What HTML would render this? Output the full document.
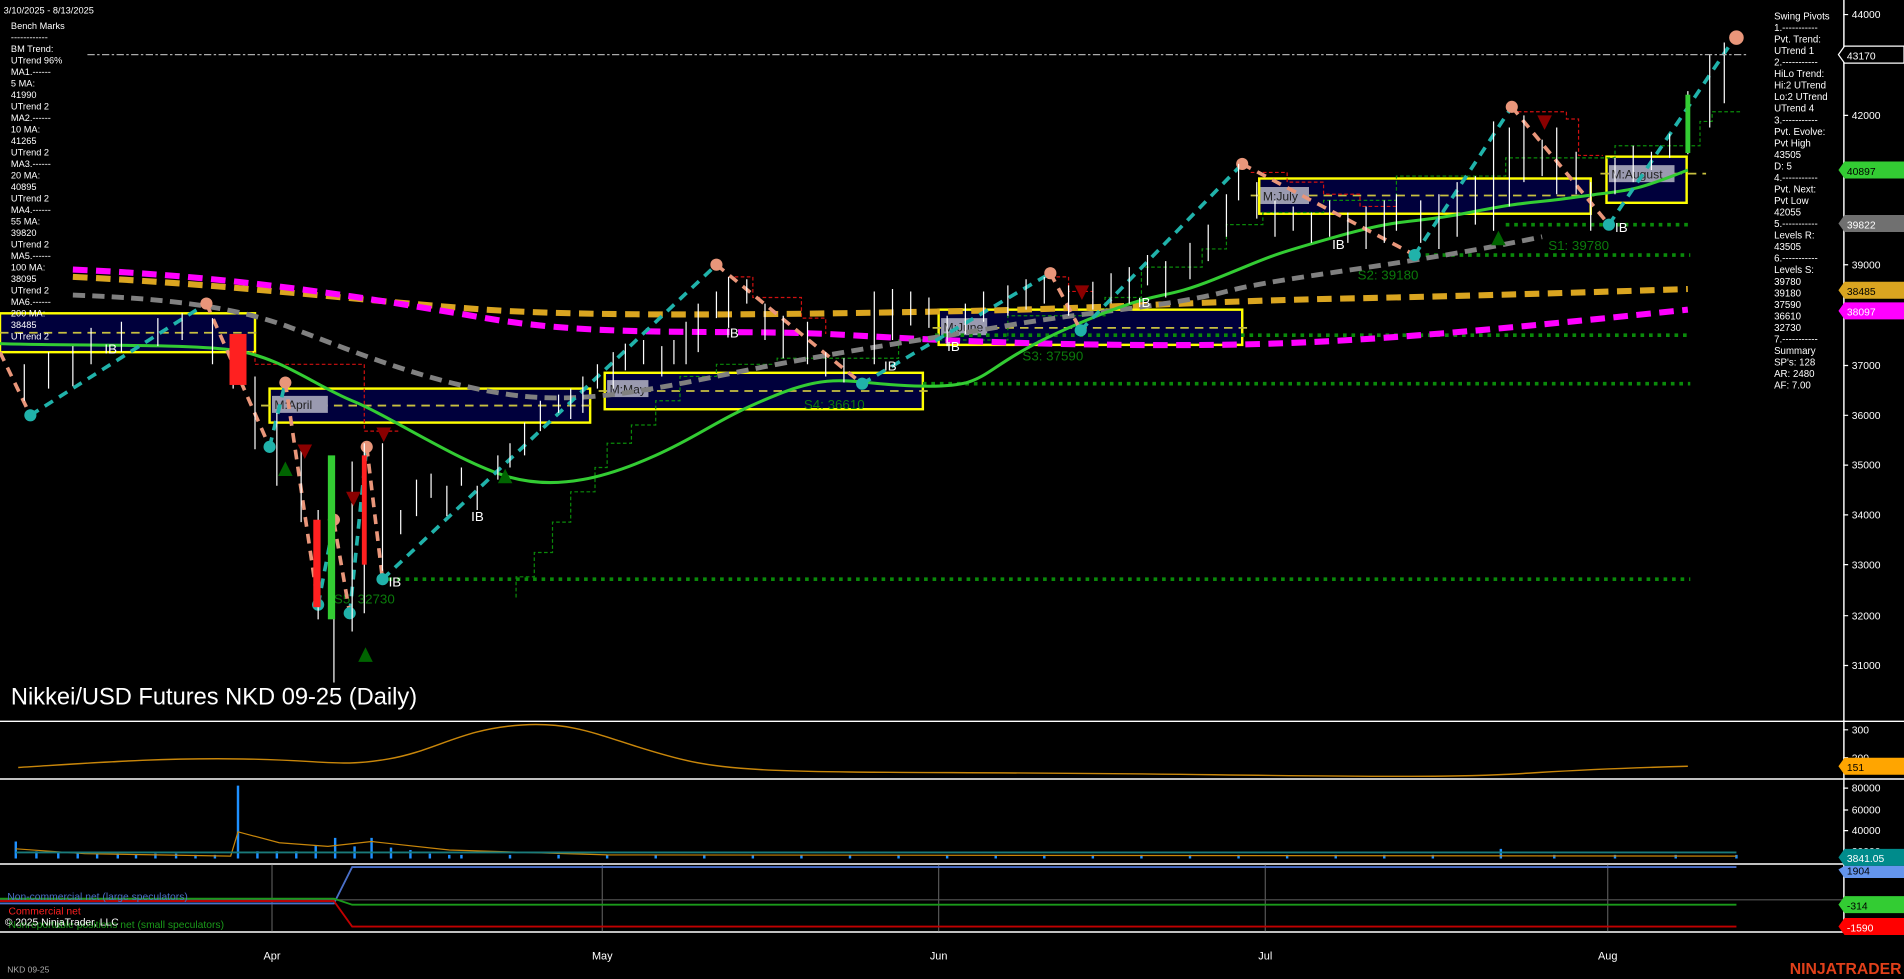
<!DOCTYPE html>
<html><head><meta charset="utf-8"><style>
html,body{margin:0;padding:0;background:#000;width:1904px;height:979px;overflow:hidden}
svg{display:block}
text{font-family:"Liberation Sans",sans-serif}
</style></head><body>
<svg width="1904" height="979" viewBox="0 0 1568 806.2" preserveAspectRatio="none" xmlns="http://www.w3.org/2000/svg">
<rect width="1568" height="806.2" fill="#000"/>
<!-- boxes -->
<g stroke="#ffff00" stroke-width="2" fill="#00003c">
<rect x="0" y="258" width="210" height="32"/>
<rect x="222" y="320" width="264" height="28"/>
<rect x="498" y="307" width="262" height="30"/>
<rect x="773" y="255" width="250" height="29"/>
<rect x="1037" y="147" width="273" height="29"/>
<rect x="1323" y="129" width="66" height="38"/>
</g>
<g stroke="#c8c040" stroke-width="1.5" stroke-dasharray="7,5" fill="none">
<line x1="0" y1="274" x2="215" y2="274"/><line x1="215" y1="334" x2="490" y2="334"/>
<line x1="493" y1="322" x2="765" y2="322"/><line x1="768" y1="270" x2="1028" y2="270"/>
<line x1="1030" y1="161" x2="1315" y2="161"/><line x1="1318" y1="143" x2="1405" y2="143"/>
</g>
<g font-family="Liberation Mono,monospace" font-size="10" fill="#222">
<rect x="224" y="326" width="46" height="14" fill="#9a9ab0"/><text x="226" y="337">M:April</text>
<rect x="500" y="313" width="34" height="14" fill="#9a9ab0"/><text x="502" y="324">M:May</text>
<rect x="775" y="262" width="38" height="14" fill="#9a9ab0"/><text x="777" y="273">M:June</text>
<rect x="1038" y="154" width="40" height="14" fill="#9a9ab0"/><text x="1040" y="165">M:July</text>
<rect x="1325" y="136" width="54" height="14" fill="#9a9ab0"/><text x="1327" y="147">M:August</text>
</g>
<!-- dotted levels -->
<g stroke="#0a8a0a" stroke-width="3" stroke-dasharray="3,4" fill="none">
<line x1="1240" y1="185" x2="1392" y2="185"/><line x1="1160" y1="210" x2="1392" y2="210"/>
<line x1="770" y1="276" x2="1392" y2="276"/><line x1="760" y1="316" x2="1392" y2="316"/>
<line x1="320" y1="477" x2="1392" y2="477"/>
</g>
<g font-size="11" fill="#0b7a0b">
<text x="1275" y="206">S1: 39780</text><text x="1118" y="230">S2: 39180</text>
<text x="842" y="297">S3: 37590</text><text x="662" y="337">S4: 36610</text><text x="275" y="497">S5: 32730</text>
</g>
<!-- stepped green -->
<path d="M425,492 V475 H440 V455 H455 V430 H470 V405 H490 V385 H500 V365 H520 V350 H540 V330 H560 V310 H590 V300 H640 V295 H740 V280 H830 V260 H910 V245 H940 V220 H990 V205 H1010 V185 H1040 V175 H1090 V165 H1150 V145 H1240 V130 H1330 V120 H1400 V100 H1410 V92 H1435" stroke="#0a8a0a" stroke-width="1" stroke-dasharray="3,2" fill="none"/>
<g stroke="#d01010" stroke-width="1" stroke-dasharray="3,2" fill="none">
<path d="M190,275 V290 H210 V300 H250 V300 H300 V355 H330"/>
<path d="M600,228 H620 V245 H660 V262 H680 V275"/>
<path d="M860,228 H880 V240 H900 V255"/>
<path d="M1030,142 H1060 V150 H1090 V160 H1120 V170 H1150 V178"/>
<path d="M1250,92 H1290 V98 H1300 V128 H1320"/>
</g>
<!-- MAs -->
<path d="M60,228 C200,235 300,248 400,255 S700,258 800,256 1000,248 1100,246 1300,241 1390,238" stroke="#daa520" stroke-width="5" stroke-dasharray="12,7" fill="none"/>
<path d="M60,222 C200,228 300,245 400,262 S600,270 700,276 900,285 1000,284 1200,275 1390,255" stroke="#ff00ff" stroke-width="5" stroke-dasharray="12,7" fill="none"/>
<path d="M60,243 C150,246 200,255 240,270 S350,315 420,325 560,315 640,300 760,280 830,268 960,253 1010,240 1150,220 1270,195 1390,170" stroke="#808080" stroke-width="4" stroke-dasharray="10,6" fill="none"/>
<path d="M0,283 C60,285 150,283 190,288 S260,318 290,330 380,382 420,393 500,393 540,375 590,345 640,325 700,317 760,318 800,305 880,270 950,250 1000,230 1040,212 1100,195 1160,185 1210,175 1260,168 1300,162 1340,160 1390,140" stroke="#33cc33" stroke-width="2.5" fill="none"/>
<!-- swing lines -->
<g stroke="#20b2aa" stroke-width="3" stroke-dasharray="8,6" fill="none">
<path d="M25,342 L170,250"/><path d="M222,368 L235,315"/><path d="M262,498 L275,430"/><path d="M288,505 L302,368"/>
<path d="M315,477 L590,218"/><path d="M710,316 L865,225"/><path d="M890,272 L1023,135"/>
<path d="M1165,210 L1245,88"/><path d="M1325,185 L1428,32"/>
</g>
<g stroke="#e9967a" stroke-width="3" stroke-dasharray="8,6" fill="none">
<path d="M0,290 L25,342"/><path d="M170,250 L222,368"/><path d="M235,315 L262,498"/><path d="M275,430 L288,505"/><path d="M302,368 L315,477"/>
<path d="M590,218 L710,316"/><path d="M865,225 L890,272"/><path d="M1023,135 L1165,210"/><path d="M1245,88 L1325,185"/>
</g>
<g fill="#e9967a"><circle cx="170" cy="250" r="5"/><circle cx="235" cy="315" r="5"/><circle cx="275" cy="428" r="5"/><circle cx="302" cy="368" r="5"/><circle cx="590" cy="218" r="5"/><circle cx="865" cy="225" r="5"/><circle cx="1023" cy="135" r="5"/><circle cx="1245" cy="88" r="5"/><circle cx="1430" cy="31" r="6"/></g>
<g fill="#20b2aa"><circle cx="25" cy="342" r="5"/><circle cx="222" cy="368" r="5"/><circle cx="262" cy="498" r="5"/><circle cx="288" cy="505" r="5"/><circle cx="315" cy="477" r="5"/><circle cx="710" cy="316" r="5"/><circle cx="890" cy="272" r="5"/><circle cx="1165" cy="210" r="5"/><circle cx="1325" cy="185" r="5"/></g>
<!-- candles -->
<g stroke="#fff" stroke-width="1">
<path d="M20,300V330M40,290V320M60,285V318M75,270V300M100,265V290M130,262V285M150,258V280M175,262V300M192,280V320M210,310V370M228,340V400M248,370V430M262,420V510M275,470V562M290,380V520M300,365V505M315,365V470M330,420V440M343,395V425M355,390V410M368,400V425M380,385V400M393,400V420M410,375V395M420,365V385M432,348V375M445,330V355M460,325V340M470,320V345M480,310V340M492,300V320M505,290V320M515,283V305M530,280V300M545,285V310M555,280V300M565,265V300M575,250V290M590,240V262M600,228V270M615,230V250M630,250V280M645,260V295M665,265V300M680,290V310M695,295V315M720,240V300M735,238V280M750,240V268M765,245V270M780,260V285M795,250V275M810,240V265M830,235V260M845,230V255M860,228V250M880,235V260M900,232V255M915,225V250M930,220V250M945,210V235M960,215V245M980,200V230M995,185V215M1010,160V195M1020,135V165M1035,150V180M1050,165V195M1065,170V190M1080,175V200M1095,165V195M1110,175V200M1125,170V205M1140,165V200M1150,160V190M1170,165V200M1185,160V205M1200,150V195M1215,145V185M1230,100V190M1243,105V170M1255,95V150M1270,115V145M1282,105V160M1298,125V160M1310,150V190M1330,130V160M1345,120V150M1360,125V140M1375,110V130M1390,75V127M1408,45V105M1420,35V85"/>
</g>
<g fill="#ff2020"><rect x="189" y="275" width="14" height="42"/><rect x="258" y="428" width="6" height="72"/><rect x="298" y="375" width="4" height="90"/></g>
<g fill="#33cc33"><rect x="270" y="375" width="6" height="135"/><rect x="1388" y="78" width="4" height="48"/></g>
<g fill="#006400"><path d="M229,392l6,-12l6,12z M295,545l6,-12l6,12z M410,398l6,-12l6,12z M1228,202l6,-12l6,12z"/></g>
<g fill="#8b0000"><path d="M245,366l6,12l6,-12z M285,405l6,12l6,-12z M310,352l6,12l6,-12z M885,235l6,12l6,-12z M1266,95l6,12l6,-12z"/></g>
<g font-size="11" fill="#fff"><text x="86" y="291">IB</text><text x="320" y="483">IB</text><text x="388" y="429">IB</text><text x="598" y="278">IB</text><text x="728" y="305">IB</text><text x="780" y="289">IB</text><text x="937" y="253">IB</text><text x="1097" y="205">IB</text><text x="1330" y="191">IB</text></g>
<!-- 43170 line -->
<line x1="72" y1="45" x2="1440" y2="45" stroke="#aaa" stroke-width="1" stroke-dasharray="6,2,2,2"/>
<text x="9" y="580" font-size="19.5" fill="#fff">Nikkei/USD Futures NKD 09-25 (Daily)</text>
<!-- separators -->
<g stroke="#fff" stroke-width="1.2"><line x1="0" y1="594" x2="1568" y2="594"/><line x1="0" y1="641.5" x2="1568" y2="641.5"/><line x1="0" y1="711.5" x2="1568" y2="711.5"/><line x1="0" y1="767.5" x2="1568" y2="767.5"/><line x1="1518.5" y1="0" x2="1518.5" y2="767.5"/></g>
<!-- indicator -->
<path d="M15,632 C80,628 130,624 200,625 S280,632 320,625 380,600 430,597 500,610 560,625 700,634 1000,638 1200,636 1390,631" stroke="#c8860a" stroke-width="1.2" fill="none"/>
<!-- volume -->
<g stroke="#1e90ff" stroke-width="2">
<path d="M13,707V693M30,707V701M48,707V702M64,707V702M80,707V703M97,707V703M112,707V704M128,707V703M145,707V703M161,707V704M177,707V704M196,707V647M212,707V701M228,707V701M244,707V701M260,707V696M276,707V690M292,707V697M306,707V690M322,707V698M338,707V700M354,707V703M370,707V704"/>
<path d="M380,707V704M420,707V704M460,707V704M500,707V704M540,707V704M580,707V704M620,707V704M660,707V704M700,707V704M740,707V704M780,707V704M820,707V704M860,707V704M900,707V704M940,707V704M980,707V704M1020,707V704M1060,707V704M1100,707V704M1140,707V704M1180,707V704M1236,707V699M1280,707V704M1330,707V704M1380,707V704M1430,707V704"/>
</g>
<path d="M13,699 L70,703 L190,705 L196,685 L230,694 L270,697 L306,693 L370,700 L500,704 L1430,705" stroke="#c8860a" stroke-width="1" fill="none"/>
<path d="M13,702 H1430" stroke="#1a7a7a" stroke-width="1.5"/>
<!-- COT -->
<g stroke="#555" stroke-width="1"><line x1="224" y1="712" x2="224" y2="767"/><line x1="496" y1="712" x2="496" y2="767"/><line x1="773" y1="712" x2="773" y2="767"/><line x1="1042" y1="712" x2="1042" y2="767"/><line x1="1324" y1="712" x2="1324" y2="767"/><line x1="0" y1="741" x2="1518" y2="741"/></g>
<path d="M0,744 H275 L290,714 H1430" stroke="#4a6fc8" stroke-width="1.5" fill="none"/>
<path d="M0,740 H275 L290,745 H1430" stroke="#1a9a1a" stroke-width="1.5" fill="none"/>
<path d="M0,742 H275 L290,763 H1430" stroke="#c00000" stroke-width="1.5" fill="none"/>
<g font-size="8.5"><text x="6" y="741" fill="#4a6fc8">Non-commercial net (large speculators)</text><text x="7" y="753" fill="#ff2020">Commercial net</text><text x="7" y="764" fill="#1a9a1a">Nonreportable positions net (small speculators)</text><text x="4" y="762" fill="#fff">© 2025 NinjaTrader, LLC</text></g>
<!-- x axis -->
<g font-size="9" fill="#fff" text-anchor="middle"><text x="224" y="790">Apr</text><text x="496" y="790">May</text><text x="773" y="790">Jun</text><text x="1042" y="790">Jul</text><text x="1324" y="790">Aug</text></g>
<text x="6" y="801" font-size="7" fill="#aaa">NKD 09-25</text>
<text x="1566" y="802" font-size="13" font-weight="bold" fill="#e0401a" text-anchor="end">NINJATRADER</text>
<!-- left text -->
<g font-size="7.6" fill="#fff">
<text x="3" y="11">3/10/2025 - 8/13/2025</text>
<text x="9" y="24">Bench Marks</text><text x="9" y="33.5">------------</text><text x="9" y="43">BM Trend:</text><text x="9" y="52.4">UTrend 96%</text><text x="9" y="61.9">MA1.------</text><text x="9" y="71.4">5 MA:</text><text x="9" y="80.8">41990</text><text x="9" y="90.3">UTrend 2</text><text x="9" y="99.8">MA2.------</text><text x="9" y="109.2">10 MA:</text><text x="9" y="118.7">41265</text><text x="9" y="128.2">UTrend 2</text><text x="9" y="137.6">MA3.------</text><text x="9" y="147.1">20 MA:</text><text x="9" y="156.6">40895</text><text x="9" y="166">UTrend 2</text><text x="9" y="175.5">MA4.------</text><text x="9" y="185">55 MA:</text><text x="9" y="194.4">39820</text><text x="9" y="203.9">UTrend 2</text><text x="9" y="213.4">MA5.------</text><text x="9" y="222.8">100 MA:</text><text x="9" y="232.3">38095</text><text x="9" y="241.8">UTrend 2</text><text x="9" y="251.2">MA6.------</text><text x="9" y="260.7">200 MA:</text><text x="9" y="270.2">38485</text><text x="9" y="279.6">UTrend 2</text>
</g>
<!-- right text -->
<g font-size="8" fill="#fff">
<text x="1461" y="16">Swing Pivots</text><text x="1461" y="25.5">1.-----------</text><text x="1461" y="35">Pvt. Trend:</text><text x="1461" y="44.5">UTrend 1</text><text x="1461" y="54">2.-----------</text><text x="1461" y="63.5">HiLo Trend:</text><text x="1461" y="73">Hi:2 UTrend</text><text x="1461" y="82.5">Lo:2 UTrend</text><text x="1461" y="92">UTrend 4</text><text x="1461" y="101.5">3.-----------</text><text x="1461" y="111">Pvt. Evolve:</text><text x="1461" y="120.5">Pvt High</text><text x="1461" y="130">43505</text><text x="1461" y="139.5">D: 5</text><text x="1461" y="149">4.-----------</text><text x="1461" y="158.5">Pvt. Next:</text><text x="1461" y="168">Pvt Low</text><text x="1461" y="177.5">42055</text><text x="1461" y="187">5.-----------</text><text x="1461" y="196.5">Levels R:</text><text x="1461" y="206">43505</text><text x="1461" y="215.5">6.-----------</text><text x="1461" y="225">Levels S:</text><text x="1461" y="234.5">39780</text><text x="1461" y="244">39180</text><text x="1461" y="253.5">37590</text><text x="1461" y="263">36610</text><text x="1461" y="272.5">32730</text><text x="1461" y="282">7.-----------</text><text x="1461" y="291.5">Summary</text><text x="1461" y="301">SP's: 128</text><text x="1461" y="310.5">AR: 2480</text><text x="1461" y="320">AF: 7.00</text>
</g>
<!-- axis labels -->
<g font-size="8.5" fill="#fff">
<text x="1525" y="15">44000</text><text x="1525" y="98">42000</text><text x="1525" y="221">39000</text><text x="1525" y="304">37000</text><text x="1525" y="345">36000</text><text x="1525" y="386">35000</text><text x="1525" y="427">34000</text><text x="1525" y="468">33000</text><text x="1525" y="510">32000</text><text x="1525" y="551">31000</text>
<text x="1525" y="604">300</text><text x="1525" y="627">200</text>
<text x="1525" y="652">80000</text><text x="1525" y="670">60000</text><text x="1525" y="687">40000</text><text x="1525" y="704">20000</text>
</g>
<g stroke="#fff" stroke-width="1"><path d="M1518,12h4M1518,95h4M1518,218h4M1518,301h4M1518,342h4M1518,383h4M1518,424h4M1518,465h4M1518,507h4M1518,548h4M1518,601h4M1518,624h4M1518,649h4M1518,667h4M1518,684h4M1518,701h4"/></g>
<!-- flags -->
<g font-size="8.5">
<path d="M1514,45 l5,-7 h49 v14 h-49z" fill="#000" stroke="#fff"/><text x="1521" y="49" fill="#fff">43170</text>
<path d="M1514,140 l5,-7 h49 v14 h-49z" fill="#33cc33"/><text x="1521" y="144" fill="#000">40897</text>
<path d="M1514,184 l5,-7 h49 v14 h-49z" fill="#707070"/><text x="1521" y="188" fill="#fff">39822</text>
<path d="M1514,239 l5,-7 h49 v14 h-49z" fill="#daa520"/><text x="1521" y="243" fill="#000">38485</text>
<path d="M1514,256 l5,-7 h49 v14 h-49z" fill="#ff00ff"/><text x="1521" y="260" fill="#fff">38097</text>
<path d="M1514,631 l5,-7 h49 v14 h-49z" fill="#ffa500"/><text x="1521" y="635" fill="#000">151</text>
<path d="M1514,706 l5,-7 h49 v14 h-49z" fill="#008b8b"/><text x="1521" y="710" fill="#fff">3841.05</text>
<path d="M1514,716 l5,-3 h49 v10 h-49z" fill="#6495ed"/><text x="1521" y="720" fill="#000">1904</text>
<path d="M1514,745 l5,-7 h49 v14 h-49z" fill="#33cc33"/><text x="1521" y="749" fill="#000">-314</text>
<path d="M1514,763 l5,-7 h49 v14 h-49z" fill="#ff0000"/><text x="1521" y="767" fill="#fff">-1590</text>
</g>
</svg>
</body></html>
